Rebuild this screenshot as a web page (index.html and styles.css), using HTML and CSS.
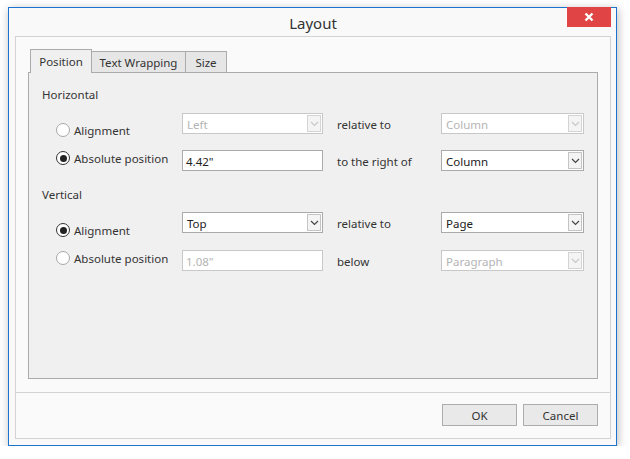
FILE: index.html
```html
<!DOCTYPE html>
<html>
<head>
<meta charset="utf-8">
<link rel="stylesheet" href="styles.css">
</head>
<body>
<div class="window">
  <div class="titlebar">
    <span class="title">Layout</span>
    <div class="close"><svg width="10" height="10" viewBox="0 0 10 10"><path d="M1.5 1.5 L8.5 8.5 M8.5 1.5 L1.5 8.5" stroke="#fff" stroke-width="2.4"/></svg></div>
  </div>
  <div class="frame">
    <div class="body">
      <div class="tabs">
        <div class="tab tab-active tab-pos">Position</div>
        <div class="tab tab-wrap">Text Wrapping</div>
        <div class="tab tab-size">Size</div>
      </div>
      <div class="panel">
        <div class="header">Horizontal</div>
        <div class="grid">
          <div class="radios">
            <div class="radio"><span class="dot"></span>Alignment</div>
            <div class="radio"><span class="dot on"></span>Absolute position</div>
          </div>
          <div class="combo disabled r1c2"><span class="val">Left</span><span class="btn"><svg width="9" height="6" viewBox="0 0 9 6"><path d="M1 1 L4.5 4.5 L8 1" fill="none" stroke="currentColor" stroke-width="1.2"/></svg></span></div>
          <div class="lbl r1c3">relative to</div>
          <div class="combo disabled r1c4"><span class="val">Column</span><span class="btn"><svg width="9" height="6" viewBox="0 0 9 6"><path d="M1 1 L4.5 4.5 L8 1" fill="none" stroke="currentColor" stroke-width="1.2"/></svg></span></div>
          <div class="textbox r2c2">4.42"</div>
          <div class="lbl r2c3">to the right of</div>
          <div class="combo r2c4"><span class="val">Column</span><span class="btn"><svg width="9" height="6" viewBox="0 0 9 6"><path d="M1 1 L4.5 4.5 L8 1" fill="none" stroke="currentColor" stroke-width="1.2"/></svg></span></div>
        </div>
        <div class="header header-v">Vertical</div>
        <div class="grid grid-v">
          <div class="radios">
            <div class="radio"><span class="dot on"></span>Alignment</div>
            <div class="radio"><span class="dot"></span>Absolute position</div>
          </div>
          <div class="combo r1c2"><span class="val">Top</span><span class="btn"><svg width="9" height="6" viewBox="0 0 9 6"><path d="M1 1 L4.5 4.5 L8 1" fill="none" stroke="currentColor" stroke-width="1.2"/></svg></span></div>
          <div class="lbl r1c3">relative to</div>
          <div class="combo r1c4"><span class="val">Page</span><span class="btn"><svg width="9" height="6" viewBox="0 0 9 6"><path d="M1 1 L4.5 4.5 L8 1" fill="none" stroke="currentColor" stroke-width="1.2"/></svg></span></div>
          <div class="textbox disabled r2c2">1.08"</div>
          <div class="lbl r2c3">below</div>
          <div class="combo disabled r2c4"><span class="val">Paragraph</span><span class="btn"><svg width="9" height="6" viewBox="0 0 9 6"><path d="M1 1 L4.5 4.5 L8 1" fill="none" stroke="currentColor" stroke-width="1.2"/></svg></span></div>
        </div>
      </div>
    </div>
    <div class="footer">
      <div class="button">OK</div>
      <div class="button">Cancel</div>
    </div>
  </div>
</div>
</body>
</html>
```
FILE: styles.css
```css
html, body {
  margin: 0;
  padding: 0;
  background: #ffffff;
}
body {
  padding: 7px 0 0 8px;
  font-family: "Noto Sans", "Open Sans", sans-serif;
  font-size: 11.5px;
  color: #333333;
}
.window {
  position: relative;
  border: 1px solid #1c74cc;
  background: #f9f9f9;
  box-shadow: 1px 2px 9px rgba(0, 0, 0, 0.28);
  padding: 0 5px 6px 6px;
  box-sizing: border-box;
  width: 609px;
  height: 439px;
  display: flex;
  flex-direction: column;
}
.titlebar {
  height: 28px;
  display: flex;
  align-items: center;
  justify-content: center;
  flex: none;
}
.title {
  font-size: 15px;
  color: #333333;
  margin-top: 2px;
}
.close {
  position: absolute;
  top: -1px;
  right: 5px;
  width: 44px;
  height: 20px;
  background: #e04444;
  display: flex;
  align-items: center;
  justify-content: center;
}
.frame {
  flex: 1;
  border: 1px solid #d3d3d3;
  background: #fafafa;
  display: flex;
  flex-direction: column;
}
.body {
  padding: 12px 12px 13px 12px;
  border-bottom: 1px solid #d3d3d3;
  display: flex;
  flex-direction: column;
}
.tabs {
  display: flex;
  align-items: flex-end;
  padding-left: 2px;
  height: 23px;
  position: relative;
  z-index: 1;
}
.tab {
  box-sizing: border-box;
  height: 21px;
  border: 1px solid #ababab;
  border-bottom: none;
  background: #e6e6e6;
  display: flex;
  align-items: center;
  justify-content: center;
  margin-left: -1px;
  color: #333333;
  padding-top: 1px;
}
.tab-active {
  height: 24px;
  margin-bottom: -1px;
  background: #f0f0f0;
  margin-left: 0;
  padding-top: 0;
}
.tab-pos { width: 62px; }
.tab-wrap { width: 95px; }
.tab-size { width: 42px; }
.panel {
  height: 307px;
  box-sizing: border-box;
  border: 1px solid #ababab;
  background: #f0f0f0;
  padding: 14px 13px 0 13px;
}
.header {
  height: 16px;
  line-height: 16px;
}
.header-v {
  margin-top: 16px;
}
.grid {
  display: grid;
  grid-template-columns: 126px 141px 118px 143px;
  grid-template-rows: 21px 21px;
  row-gap: 16px;
  margin-top: 10px;
  margin-left: 14px;
}
.grid-v {
  margin-top: 9px;
  row-gap: 17px;
}
.radios {
  grid-row: 1 / 3;
  grid-column: 1;
  display: flex;
  flex-direction: column;
  gap: 12px;
  padding-top: 9px;
}
.grid-v .radios {
  padding-top: 10px;
}
.radio {
  height: 16px;
  display: flex;
  align-items: center;
  gap: 4px;
  color: #333333;
}
.dot {
  width: 12px;
  height: 12px;
  border: 1px solid #a8a8a8;
  border-radius: 50%;
  background: #ffffff;
  display: flex;
  align-items: center;
  justify-content: center;
  flex: none;
}
.dot.on {
  border-color: #333333;
}
.dot.on::after {
  content: "";
  width: 7px;
  height: 7px;
  border-radius: 50%;
  background: #222222;
}
.r1c2 { grid-row: 1; grid-column: 2; }
.r1c3 { grid-row: 1; grid-column: 3; }
.r1c4 { grid-row: 1; grid-column: 4; }
.r2c2 { grid-row: 2; grid-column: 2; }
.r2c3 { grid-row: 2; grid-column: 3; }
.r2c4 { grid-row: 2; grid-column: 4; }
.lbl {
  padding-left: 14px;
  display: flex;
  align-items: center;
  padding-top: 2px;
  color: #333333;
}
.combo, .textbox {
  box-sizing: border-box;
  height: 21px;
  border: 1px solid #aaaaaa;
  background: #ffffff;
  display: flex;
  align-items: center;
  color: #222222;
}
.textbox {
  padding-left: 3px;
  padding-top: 2px;
}
.combo .val {
  flex: 1;
  padding-left: 4px;
  padding-top: 2px;
}
.combo .btn {
  box-sizing: border-box;
  width: 14px;
  height: 17px;
  margin-right: 1px;
  border: 1px solid #c4c4c4;
  background: #f4f4f4;
  display: flex;
  align-items: center;
  justify-content: center;
  color: #444444;
}
.disabled {
  color: #b4b4b4;
  border-color: #c8c8c8;
}
.combo.disabled .btn {
  color: #c8c8c8;
  border-color: #d4d4d4;
}
.footer {
  flex: 1;
  display: flex;
  justify-content: flex-end;
  align-items: flex-start;
  padding: 11px 12px 0 0;
  gap: 6px;
}
.button {
  box-sizing: border-box;
  width: 75px;
  height: 22px;
  border: 1px solid #adadad;
  background: #e9e9e9;
  display: flex;
  align-items: center;
  justify-content: center;
  color: #333333;
}
```
